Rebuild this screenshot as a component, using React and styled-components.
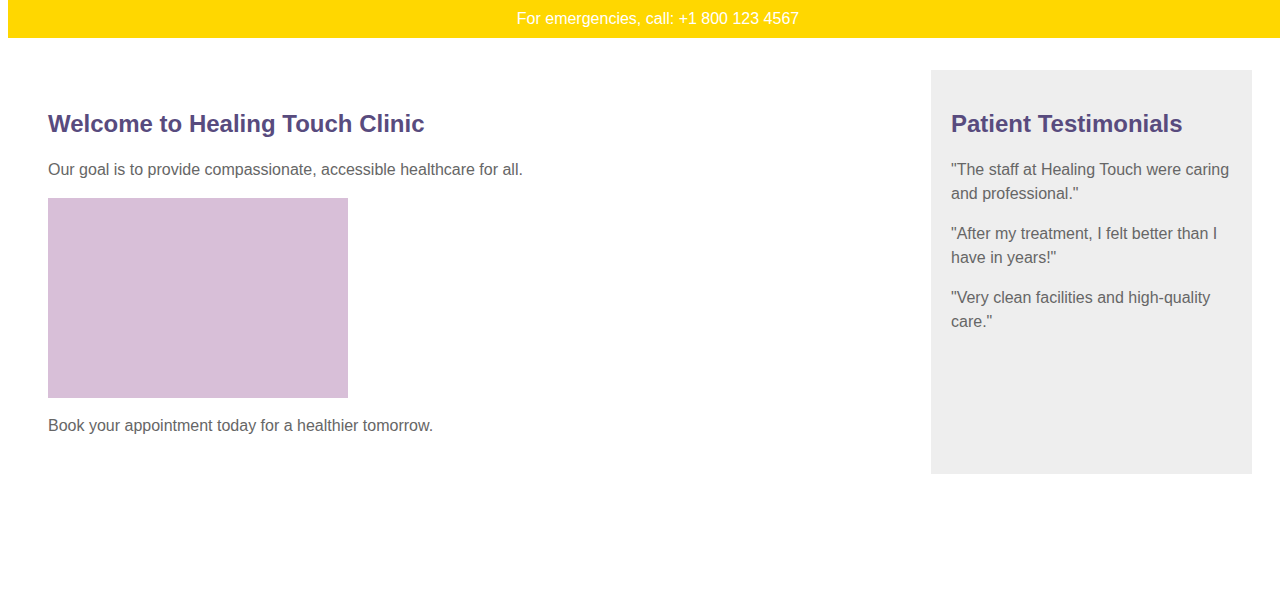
import React from 'react';
import styled, { createGlobalStyle } from 'styled-components';

const GlobalStyle = createGlobalStyle`
  body {
    margin: 8px;
    font-family: "Liberation Sans", Arial, sans-serif;
    color: #666;
    background: #fff;
  }
`;

const Banner = styled.div`
  position: fixed;
  top: 0;
  width: 100%;
  padding: 10px;
  background: #ffd700;
  color: #fff;
  font-size: 16px;
  text-align: center;
`;

const Main = styled.div`
  display: flex;
  gap: 20px;
  padding: 62px 20px 20px;
`;

const Column = styled.section`
  flex: ${props => props.grow};
  padding: 20px;
  background: ${props => props.bg || 'transparent'};
`;

const Title = styled.h2`
  margin: 20px 0;
  font-size: 24px;
  font-weight: bold;
  color: #584b7e;
`;

const Text = styled.p`
  margin: 16px 0;
  font-size: 16px;
  line-height: 1.5;
`;

const Picture = styled.div`
  width: 300px;
  height: 200px;
  background: #d8bfd8;
`;

const testimonials = [
  '"The staff at Healing Touch were caring and professional."',
  '"After my treatment, I felt better than I have in years!"',
  '"Very clean facilities and high-quality care."',
];

const App = () => (
  <>
    <GlobalStyle />
    <Banner>For emergencies, call: +1 800 123 4567</Banner>
    <Main>
      <Column grow={3}>
        <Title>Welcome to Healing Touch Clinic</Title>
        <Text>Our goal is to provide compassionate, accessible healthcare for all.</Text>
        <Picture />
        <Text>Book your appointment today for a healthier tomorrow.</Text>
      </Column>
      <Column grow={1} bg="#eee">
        <Title>Patient Testimonials</Title>
        {testimonials.map((t, i) => (
          <Text key={i}>{t}</Text>
        ))}
      </Column>
    </Main>
  </>
);

export default App;
